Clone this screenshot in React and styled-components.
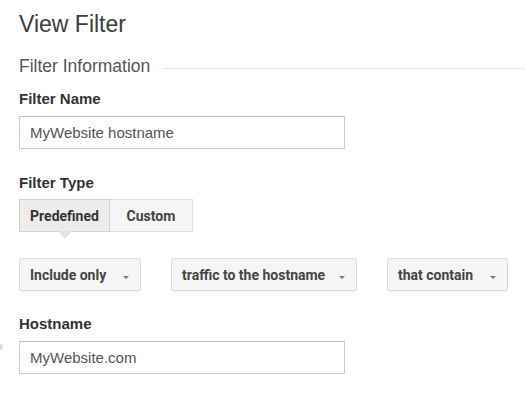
import React from "react";
import styled, { createGlobalStyle } from "styled-components";

const Global = createGlobalStyle`
  html, body { margin: 0; padding: 0; background: #fff; }
  body { font-family: "Liberation Sans", Arial, sans-serif; }
`;

const Page = styled.div`
  position: relative;
  width: 525px;
  height: 409px;
  overflow: hidden;
  padding: 10px 0 0 19px;
  box-sizing: border-box;
`;

const Title = styled.h1`
  margin: 0;
  font-size: 23px;
  font-weight: normal;
  color: #3c3c3c;
  line-height: 28px;
`;

const Section = styled.div`
  display: flex;
  align-items: center;
  gap: 13px;
  margin-top: 18px;
  font-size: 17.5px;
  color: #555;
  line-height: 20px;
  &::after {
    content: "";
    flex: 1;
    height: 1px;
    background: #e2e2e2;
    margin-top: 4px;
  }
`;

const Label = styled.div`
  margin-top: ${(p) => p.$top}px;
  font-size: 15px;
  font-weight: bold;
  color: #333;
  line-height: 18px;
`;

const Field = styled.div`
  margin-top: 8px;
  width: 326px;
  height: 33px;
  box-sizing: border-box;
  border: 1px solid #ccc;
  border-top-color: #c0c0c0;
  padding: 0 10px;
  display: flex;
  align-items: center;
  font-size: 15px;
  color: #555;
`;

const Toggle = styled.div`
  display: flex;
  margin-top: 7px;
`;

const ToggleBtn = styled.div`
  position: relative;
  width: ${(p) => p.$w}px;
  height: 33px;
  box-sizing: border-box;
  display: flex;
  align-items: center;
  justify-content: center;
  font-family: Roboto, "Liberation Sans", sans-serif;
  font-weight: bold;
  font-size: 14px;
  color: ${(p) => (p.$on ? "#333" : "#444")};
  background: ${(p) => (p.$on ? "#ececec" : "#f5f5f5")};
  border: 1px solid ${(p) => (p.$on ? "#d2d2d2" : "#e0e0e0")};
  border-left-width: ${(p) => (p.$on ? 1 : 0)}px;
  &::after {
    content: ${(p) => (p.$on ? '""' : "none")};
    position: absolute;
    left: 50%;
    bottom: -8px;
    margin-left: -7px;
    border-left: 7px solid transparent;
    border-right: 7px solid transparent;
    border-top: 8px solid #e2e2e2;
  }
`;

const Row = styled.div`
  display: flex;
  gap: 30px;
  margin-top: 26px;
`;

const Select = styled.div`
  width: ${(p) => p.$w}px;
  height: 33px;
  box-sizing: border-box;
  padding: 0 11px 0 10px;
  display: flex;
  align-items: center;
  justify-content: space-between;
  font-family: Roboto, "Liberation Sans", sans-serif;
  font-weight: bold;
  font-size: 14px;
  color: #444;
  background: #f5f5f5;
  border: 1px solid #dcdcdc;
  border-radius: 2px;
  box-shadow: 0 1px 1px rgba(0, 0, 0, 0.04);
`;

const Caret = styled.span`
  width: 0;
  height: 0;
  margin-top: 6px;
  border-left: 3px solid transparent;
  border-right: 3px solid transparent;
  border-top: 3px solid #777;
`;

const Dot = styled.div`
  position: absolute;
  left: -3px;
  top: 344px;
  width: 6px;
  height: 6px;
  border-radius: 50%;
  background: #ddd;
`;

export default function App() {
  return (
    <Page>
      <Global />
      <Title>View Filter</Title>
      <Section>Filter Information</Section>
      <Label $top={14}>Filter Name</Label>
      <Field>MyWebsite hostname</Field>
      <Label $top={25}>Filter Type</Label>
      <Toggle>
        <ToggleBtn $on $w={91}>Predefined</ToggleBtn>
        <ToggleBtn $w={83}>Custom</ToggleBtn>
      </Toggle>
      <Row>
        <Select $w={122}>
          Include only <Caret />
        </Select>
        <Select $w={186}>
          traffic to the hostname <Caret />
        </Select>
        <Select $w={121}>
          that contain <Caret />
        </Select>
      </Row>
      <Label $top={24}>Hostname</Label>
      <Field>MyWebsite.com</Field>
      <Dot />
    </Page>
  );
}
